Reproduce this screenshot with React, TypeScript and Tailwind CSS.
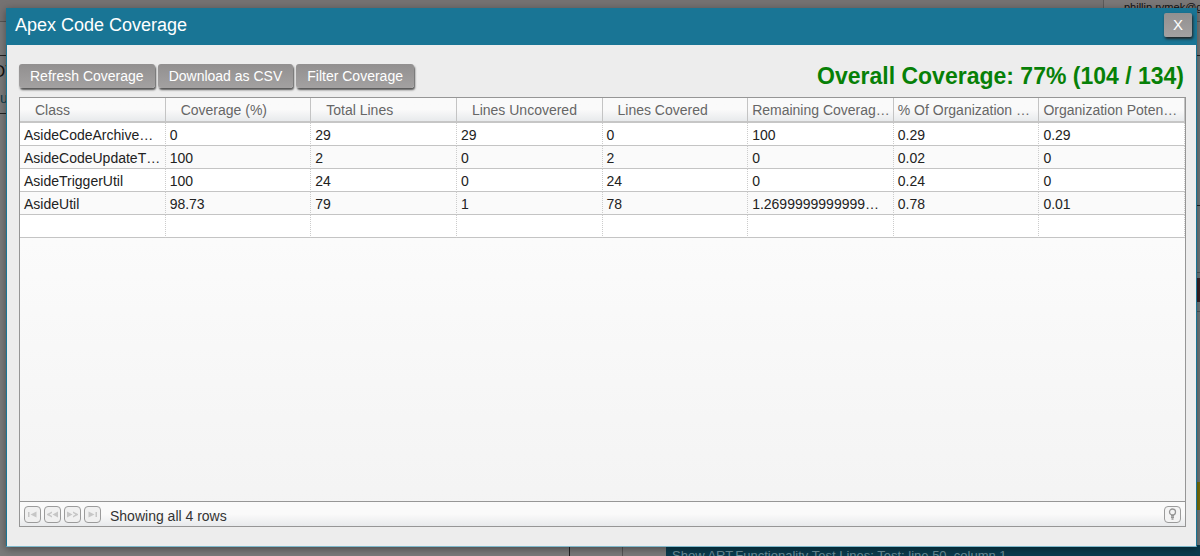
import React from "react";

const columns = [
  { title: "Class", padded: true },
  { title: "Coverage (%)", padded: true },
  { title: "Total Lines", padded: true },
  { title: "Lines Uncovered", padded: true },
  { title: "Lines Covered", padded: true },
  { title: "Remaining Coverag…", padded: false },
  { title: "% Of Organization …", padded: false },
  { title: "Organization Poten…", padded: false },
];

const rows = [
  ["AsideCodeArchive…", "0", "29", "29", "0", "100", "0.29", "0.29"],
  ["AsideCodeUpdateT…", "100", "2", "0", "2", "0", "0.02", "0"],
  ["AsideTriggerUtil", "100", "24", "0", "24", "0", "0.24", "0"],
  ["AsideUtil", "98.73", "79", "1", "78", "1.2699999999999…", "0.78", "0.01"],
  ["", "", "", "", "", "", "", ""],
];

function ToolButton({ children }: { children: React.ReactNode }) {
  return (
    <button
      type="button"
      className="h-6 whitespace-nowrap rounded-[3px] bg-linear-to-b from-[#929090] to-[#a3a1a1] px-[11px] text-[14px] leading-6 text-white shadow-[1px_2px_2px_#555]"
    >
      {children}
    </button>
  );
}

function PagerButton({ label, children }: { label: string; children: React.ReactNode }) {
  return (
    <button
      type="button"
      aria-label={label}
      className="flex h-[17px] w-[17px] items-center justify-center rounded-[4px] border border-[#9b9b9b] bg-[#f0f0f0] text-[#c6c6c6]"
    >
      <svg width="11" height="7" viewBox="0 0 11 7" fill="currentColor" stroke="none">
        {children}
      </svg>
    </button>
  );
}

function Backdrop() {
  return (
    <div className="absolute inset-0 overflow-hidden bg-[#7a7a7a] text-[#111]">
      <div className="absolute inset-x-0 top-0 h-[22px] border-b border-[#555] bg-[#757272]" />
      <div className="absolute right-0 top-0 h-[22px] w-[97px] border-b border-l border-[#5d5b5b] bg-[#7b7878] pl-5 text-[11px] leading-[14px]">
        phillip.rymek@gmail.com
      </div>
      <div className="absolute left-0 top-[55px] h-[59px] w-2 overflow-hidden border-y border-[#222]">
        <div className="-ml-2 mt-[6px] text-[17px] leading-5">OT</div>
        <div className="mt-[6px] text-[14px] leading-5 text-[#0d3a4a]">u</div>
      </div>
      <div className="absolute right-0 top-[55px] bottom-0 w-6 border-t border-[#222] bg-[#717b7e]" />
      <div className="absolute right-0 top-[205px] h-px w-3 bg-[#222]" />
      <div className="absolute right-0 top-[272px] h-px w-3 bg-[#50585b]" />
      <div className="absolute right-0 top-[278px] h-6 w-3 bg-[#3a2327]" />
      <div className="absolute right-0 top-[311px] h-px w-3 bg-[#50585b]" />
      <div className="absolute right-0 top-[482px] h-7 w-3 bg-[#7d720a]" />
      <div className="absolute bottom-0 left-[569px] h-4 w-px bg-[#222]" />
      <div className="absolute bottom-0 left-[622px] h-4 w-px bg-[#555]" />
      <div className="absolute bottom-0 right-0 left-[666px] h-[11px] overflow-hidden bg-[#0a3b4d] pl-[6px] text-[13px] leading-[22px] text-[#6a8f99]">
        Show ART.Functionality Test.Lines: Test: line 50, column 1
      </div>
    </div>
  );
}

export default function App() {
  return (
    <div className="relative isolate flex h-screen flex-col overflow-hidden pt-2 pr-[3px] pb-[9px] pl-[6px] font-['Liberation_Sans',sans-serif]">
      <Backdrop />
      <main className="relative flex min-h-0 flex-1 flex-col border border-[#197595] border-b-[#7fb9cc] bg-[#ededed] shadow-[0_2px_8px_rgba(0,0,0,0.4)]">
        <header className="flex h-9 shrink-0 items-center justify-between bg-[#197595] pr-1 pb-1 pl-2">
          <h1 className="text-[18px] leading-6 text-white">Apex Code Coverage</h1>
          <button
            type="button"
            aria-label="Close"
            className="h-6 w-7 rounded-[2px] bg-linear-to-b from-[#929090] to-[#a3a1a1] text-[15px] leading-6 text-white shadow-[1px_2px_3px_#222]"
          >
            X
          </button>
        </header>
        <div className="flex min-h-0 flex-1 flex-col pt-[19px] pr-[10px] pb-[19px] pl-3">
          <div className="flex h-[33px] shrink-0 items-start justify-between">
            <div className="flex gap-[3px]">
              <ToolButton>Refresh Coverage</ToolButton>
              <ToolButton>Download as CSV</ToolButton>
              <ToolButton>Filter Coverage</ToolButton>
            </div>
            <p className="pr-[2px] text-[23px] leading-6 font-bold whitespace-nowrap text-[#078007]">
              Overall Coverage: 77% (104 / 134)
            </p>
          </div>
          <section className="flex min-h-0 flex-1 flex-col border border-[#969696] bg-linear-to-b from-white to-[#f3f3f3]">
            <div className="min-h-0 flex-1">
              <table className="w-full table-fixed border-separate border-spacing-0 text-left text-[14px] leading-5">
                <thead>
                  <tr>
                    {columns.map((c) => (
                      <th
                        key={c.title}
                        className={`h-[25px] truncate border-r border-b-2 border-r-[#c4c4c4] border-b-[#c6c6c6] bg-linear-to-b from-[#fafafa] from-50% to-[#e8eaec] py-0 font-normal text-[#666] ${c.padded ? "pl-[15px]" : "pl-1"}`}
                      >
                        {c.title}
                      </th>
                    ))}
                  </tr>
                </thead>
                <tbody>
                  {rows.map((row, i) => (
                    <tr key={i} className="odd:bg-white even:bg-[#fafafa]">
                      {row.map((v, j) => (
                        <td
                          key={j}
                          className="h-[23px] truncate border-r border-b border-r-[#ccc] border-b-[#c4c4c4] pt-[2px] pb-0 pl-1 text-[#222] [border-right-style:dotted]"
                        >
                          {v}
                        </td>
                      ))}
                    </tr>
                  ))}
                </tbody>
              </table>
            </div>
            <footer className="flex h-[25px] shrink-0 items-center gap-[3px] border-t border-[#969696] bg-linear-to-b from-[#fafafa] from-50% to-[#e8eaec] px-1">
              <PagerButton label="First page">
                <path d="M1 1h1.500v5H1zM9.500 0.500v6L3.500 3.500z" />
              </PagerButton>
              <PagerButton label="Previous page">
                <path d="M5 0.500v1.500L2.500 3.500 5 5v1.500L0 4V3zM11 0.500v6L5.500 3.500z" />
              </PagerButton>
              <PagerButton label="Next page">
                <path d="M0 0.500v6L5.500 3.500zM6 0.500v1.500L8.500 3.500 6 5v1.500L11 4V3z" />
              </PagerButton>
              <PagerButton label="Last page">
                <path d="M1.500 0.500v6L7.500 3.500zM8.500 1H10v5H8.500z" />
              </PagerButton>
              <span className="ml-[6px] pt-1 text-[14px] leading-5 text-[#333]">Showing all 4 rows</span>
              <button
                type="button"
                aria-label="Hints"
                className="ml-auto flex h-[17px] w-[17px] items-center justify-center rounded-[4px] border border-[#9b9b9b] bg-[#f4f4f4] text-[#969696]"
              >
                <svg width="9" height="12" viewBox="0 0 9 12" fill="none" stroke="currentColor">
                  <circle cx="4.500" cy="4" r="3" strokeWidth="1.300" />
                  <path strokeWidth="1.500" d="M3 7.500h3M3 9.250h3M3.500 11h2" />
                </svg>
              </button>
            </footer>
          </section>
        </div>
      </main>
    </div>
  );
}
